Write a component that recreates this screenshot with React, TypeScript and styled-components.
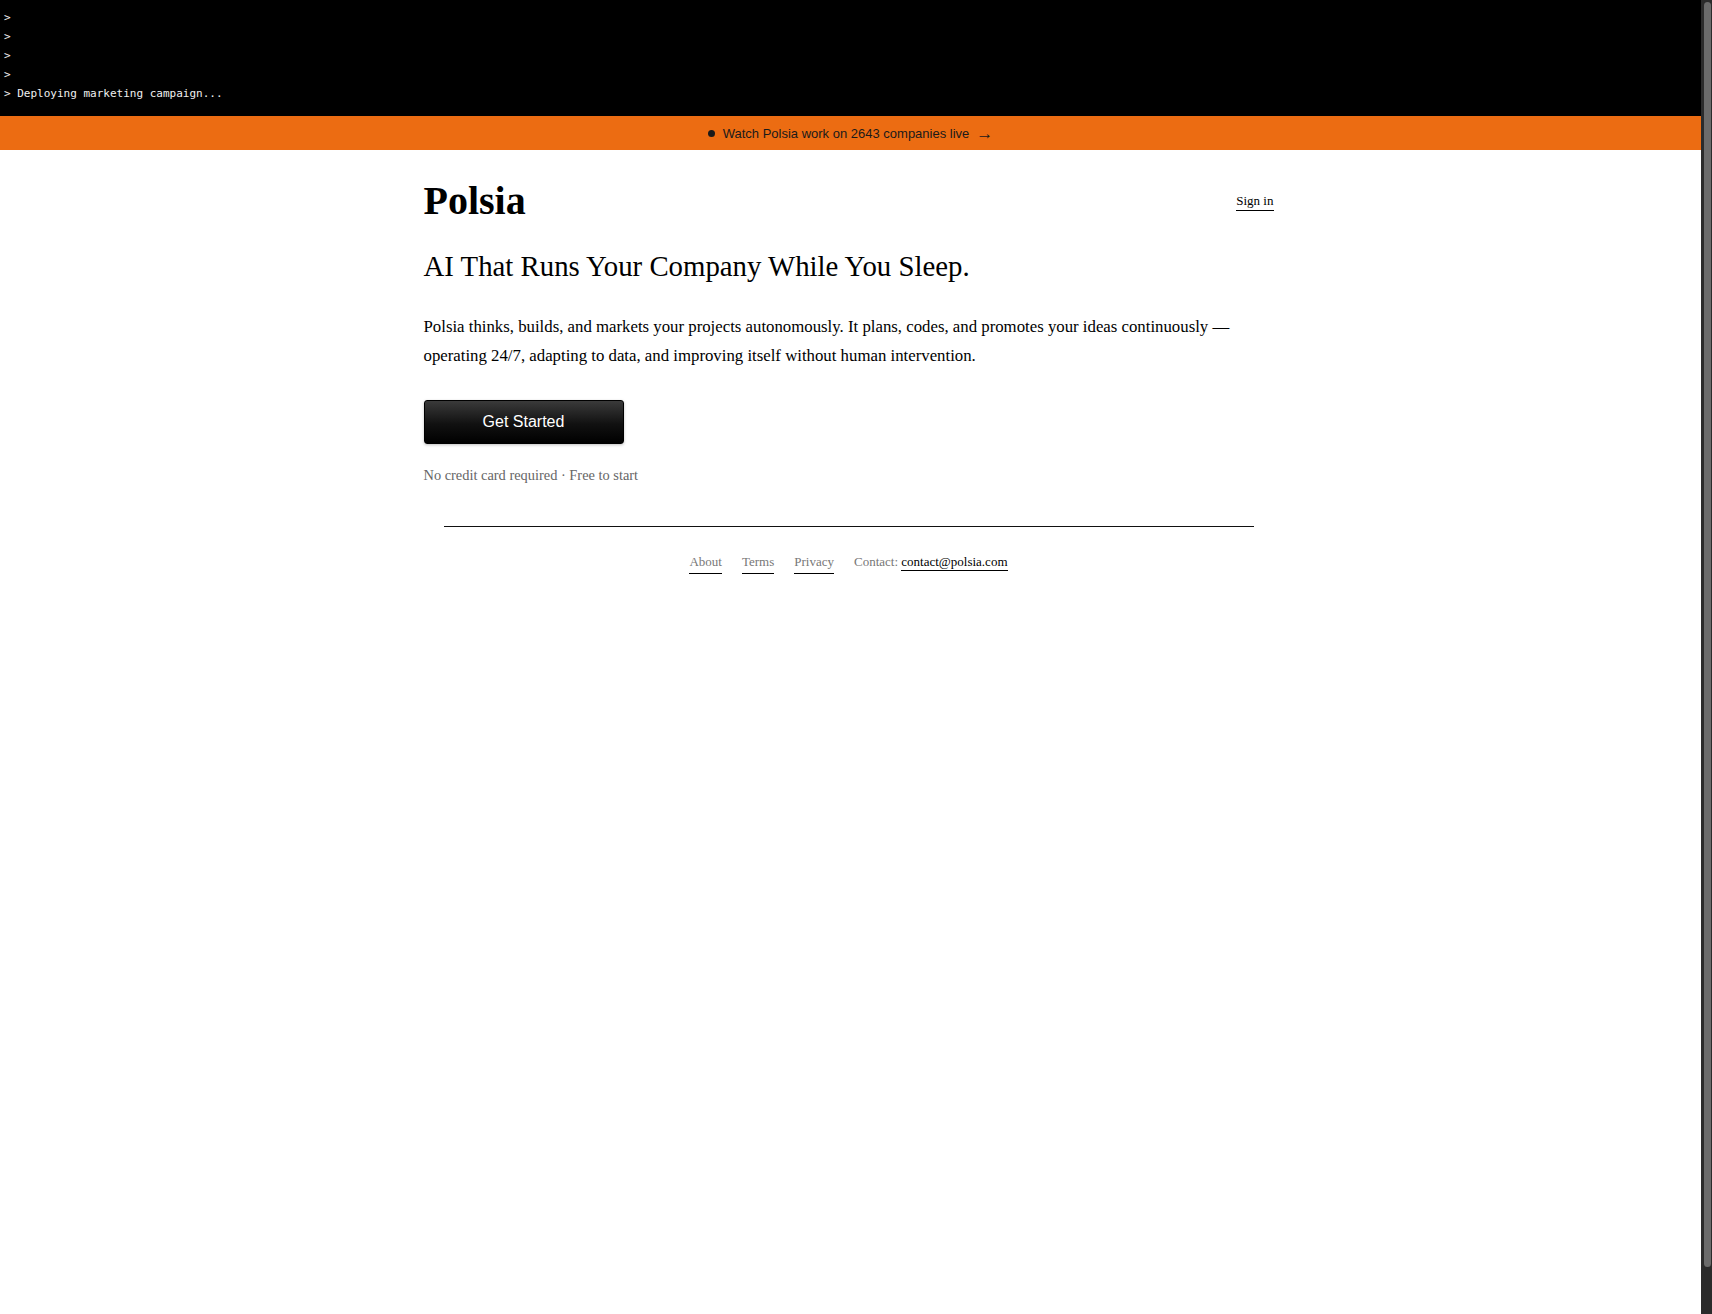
import * as React from 'react';
import styled, { createGlobalStyle } from 'styled-components';

const GlobalStyle = createGlobalStyle`
    html, body {
        height: 100%;
        overflow: hidden;
    }
    body {
        margin: 0;
        background: #fff;
        font-family: 'Liberation Serif', 'Times New Roman', serif;
        color: #000;
        -webkit-font-smoothing: antialiased;
    }
    * {
        box-sizing: border-box;
    }
`;

const terminalLines = ['', '', '', '', 'Deploying marketing campaign...'];

const App = () => {
    return (
        <Viewport>
            <GlobalStyle />
            <Page>
                <Terminal>
                    {terminalLines.map((line, i) => (
                        <TerminalLine key={i}>&gt; {line}</TerminalLine>
                    ))}
                </Terminal>
                <LiveBanner href="#">
                    <LiveDot />
                    <span>Watch Polsia work on 2643 companies live</span>
                    <Arrow>→</Arrow>
                </LiveBanner>
                <Main>
                    <Header>
                        <Logo>Polsia</Logo>
                        <SignIn href="#">Sign in</SignIn>
                    </Header>
                    <Tagline>AI That Runs Your Company While You Sleep.</Tagline>
                    <Intro>
                        Polsia thinks, builds, and markets your projects autonomously. It plans,
                        codes, and promotes your ideas continuously — operating 24/7, adapting to
                        data, and improving itself without human intervention.
                    </Intro>
                    <StartButton>Get Started</StartButton>
                    <Note>No credit card required · Free to start</Note>
                    <Footer>
                        <FooterLink href="#">About</FooterLink>
                        <FooterLink href="#">Terms</FooterLink>
                        <FooterLink href="#">Privacy</FooterLink>
                        <Contact>
                            Contact: <FooterLink href="#" $strong>contact@polsia.com</FooterLink>
                        </Contact>
                    </Footer>
                </Main>
            </Page>
            <ScrollRail>
                <ScrollThumb />
            </ScrollRail>
        </Viewport>
    );
};

const Viewport = styled.div`
    display: flex;
    height: 100vh;
`;

const Page = styled.div`
    flex: 1;
    min-width: 0;
    overflow: hidden;
`;

const ScrollRail = styled.div`
    flex: 0 0 11px;
    display: flex;
    flex-direction: column;
    background: #2b2b2b;
    padding: 2px 1px 47px 3px;
`;

const ScrollThumb = styled.div`
    flex: 1;
    background: #6b6b6b;
    border-radius: 4px;
`;

const Terminal = styled.div`
    background: #000;
    color: #f0f0f0;
    font-family: 'DejaVu Sans Mono', 'Liberation Mono', monospace;
    font-size: 11px;
    line-height: 19px;
    padding: 8px 4px 13px;
    height: 116px;
`;

const TerminalLine = styled.div`
    white-space: pre;
`;

const LiveBanner = styled.a`
    display: flex;
    align-items: center;
    justify-content: center;
    height: 34px;
    background: #ec6c12;
    color: #1a1a1a;
    font-family: 'Liberation Sans', Arial, sans-serif;
    font-size: 13px;
    text-decoration: none;
`;

const LiveDot = styled.span`
    width: 7px;
    height: 7px;
    border-radius: 50%;
    background: #1a1a1a;
    margin-right: 8px;
`;

const Arrow = styled.span`
    margin-left: 7px;
    font-size: 17px;
    line-height: 1;
`;

const Main = styled.main`
    box-sizing: content-box;
    max-width: 850px;
    margin: 0 auto;
    padding: 27px 4px 0 0;
`;

const Header = styled.header`
    display: flex;
    align-items: center;
    justify-content: space-between;
`;

const Logo = styled.h1`
    margin: 0;
    font-size: 40px;
    line-height: 1.2;
    font-weight: 700;
`;

const SignIn = styled.a`
    margin-top: 1px;
    font-size: 13px;
    color: #000;
    text-decoration: none;
    border-bottom: 1px solid #000;
    padding-bottom: 1px;
`;

const Tagline = styled.h2`
    margin: 23px 0 0;
    font-size: 28.8px;
    font-weight: 400;
    line-height: 1.3;
`;

const Intro = styled.p`
    margin: 28px 0 0;
    font-size: 16.8px;
    line-height: 1.7;
`;

const StartButton = styled.button`
    display: block;
    margin-top: 29px;
    width: 200px;
    height: 44px;
    border: 1px solid #000;
    border-radius: 3px;
    background: linear-gradient(to bottom, #3a3a3a 0%, #111 55%, #000 100%);
    box-shadow: 0 1px 3px rgba(0, 0, 0, 0.25);
    color: #fff;
    font-family: 'Liberation Sans', Arial, sans-serif;
    font-size: 16px;
    cursor: pointer;
`;

const Note = styled.p`
    margin: 21px 0 0;
    font-size: 14.4px;
    line-height: 1.5;
    color: #666;
`;

const Footer = styled.footer`
    display: flex;
    justify-content: center;
    align-items: baseline;
    gap: 20px;
    margin: 40px 20px 0;
    padding-top: 25px;
    border-top: 1px solid #111;
    font-size: 13px;
    line-height: 1.5;
`;

const FooterLink = styled.a<{ $strong?: boolean }>`
    color: ${(p) => (p.$strong ? '#000' : '#777')};
    text-decoration: none;
    border-bottom: 1px solid #000;
    padding-bottom: 1px;
`;

const Contact = styled.span`
    color: #777;
`;

export default App;
